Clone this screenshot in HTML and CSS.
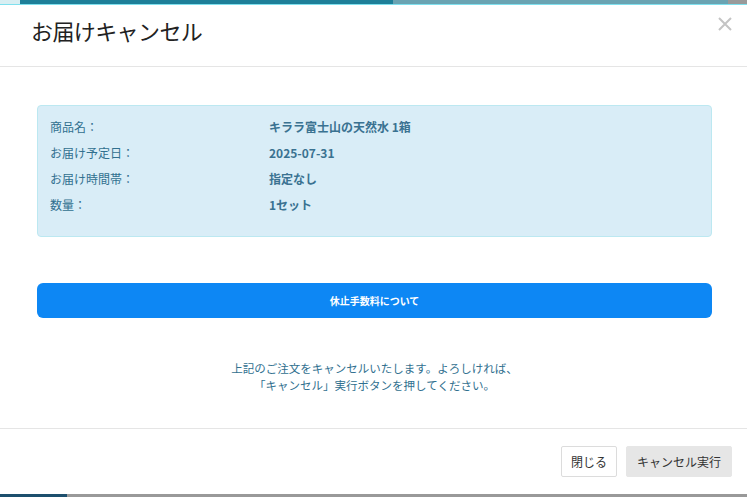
FILE: index.html
```html
<!DOCTYPE html>
<html lang="ja">
<head>
<meta charset="utf-8">
<link rel="stylesheet" href="styles.css">
</head>
<body>
<div class="page">
  <div class="top-strip">
    <div class="seg seg-light"></div>
    <div class="seg seg-dark"></div>
    <div class="seg seg-mid"></div>
    <div class="seg seg-gray"></div>
  </div>
  <div class="modal">
    <div class="modal-header">
      <h1 class="modal-title">お届けキャンセル</h1>
      <button class="close" aria-label="close">
        <svg width="16" height="16" viewBox="0 0 16 16"><path d="M2 2 L14 14 M14 2 L2 14" stroke="#c4c4c4" stroke-width="2" fill="none"/></svg>
      </button>
    </div>
    <div class="modal-body">
      <div class="info">
        <div class="row"><div class="label">商品名：</div><div class="value">キララ富士山の天然水 1箱</div></div>
        <div class="row"><div class="label">お届け予定日：</div><div class="value">2025-07-31</div></div>
        <div class="row"><div class="label">お届け時間帯：</div><div class="value">指定なし</div></div>
        <div class="row"><div class="label">数量：</div><div class="value">1セット</div></div>
      </div>
      <button class="fee-btn">休止手数料について</button>
      <p class="notice">上記のご注文をキャンセルいたします。よろしければ、<br>「キャンセル」実行ボタンを押してください。</p>
    </div>
    <div class="modal-footer">
      <button class="btn btn-close">閉じる</button>
      <button class="btn btn-exec">キャンセル実行</button>
    </div>
  </div>
  <div class="bottom-strip">
    <div class="bseg bseg-dark"></div>
    <div class="bseg bseg-gray"></div>
  </div>
</div>
</body>
</html>
```

FILE: styles.css
```css
* { box-sizing: border-box; }
html, body { margin: 0; padding: 0; background: #fff; }
body {
  font-family: "Noto Sans CJK JP", "Noto Sans", "Liberation Sans", sans-serif;
  width: 747px;
  height: 497px;
  overflow: hidden;
}
.page { display: flex; flex-direction: column; height: 497px; }

.top-strip {
  height: 5px;
  display: flex;
  border-bottom: 1px solid #7fe0ee;
}
.seg { height: 4px; }
.seg-light { width: 20px; background: #d8eef2; }
.seg-dark { width: 373px; background: #1e7f99; }
.seg-mid { width: 335px; background: #6aa3b2; }
.seg-gray { flex: 1; background: #9a9a9a; }

.modal {
  flex: 1;
  display: flex;
  flex-direction: column;
  background: #fff;
}
.modal-header {
  height: 62px;
  border-bottom: 1px solid #e5e5e5;
  display: flex;
  align-items: center;
  justify-content: space-between;
  padding: 0 14px 12px 31px;
}
.modal-title {
  margin: 0;
  font-size: 22px;
  font-weight: 400;
  color: #222;
  letter-spacing: -0.6px;
}
.close {
  border: 0;
  background: transparent;
  padding: 0;
  margin-bottom: 12px;
  display: flex;
}

.modal-body {
  flex: 1;
  padding: 38px 35px 0 37px;
  display: flex;
  flex-direction: column;
}
.info {
  background: #d9edf7;
  border: 1px solid #bce8f1;
  border-radius: 4px;
  height: 132px;
  padding: 7px 12px 0 12px;
  color: #31708f;
  font-size: 12px;
}
.row {
  display: flex;
  height: 26px;
  align-items: center;
}
.label { width: 219px; }
.value { font-weight: 700; color: #3a7291; }

.fee-btn {
  margin-top: 46px;
  height: 35px;
  border: 0;
  border-radius: 6px;
  background: #0d87f4;
  color: #fff;
  font-family: inherit;
  font-size: 10px;
  font-weight: 700;
}
.notice {
  margin: 42px 0 0 0;
  text-align: center;
  font-size: 11.5px;
  line-height: 17px;
  color: #31708f;
}

.modal-footer {
  height: 66px;
  border-top: 1px solid #e5e5e5;
  display: flex;
  justify-content: flex-end;
  align-items: flex-start;
  gap: 9px;
  padding: 17px 15px 0 0;
}
.btn {
  height: 31px;
  font-family: inherit;
  font-size: 12px;
  color: #333;
  border-radius: 2px;
  padding: 0;
  white-space: nowrap;
}
.btn-close { background: #fff; border: 1px solid #dcdcdc; width: 56px; }
.btn-exec { background: #e6e6e6; border: 1px solid #e6e6e6; width: 106px; }

.bottom-strip { height: 3px; display: flex; }
.bseg-dark { width: 67px; background: #1d4f6d; }
.bseg-gray { flex: 1; background: #999; }
```
